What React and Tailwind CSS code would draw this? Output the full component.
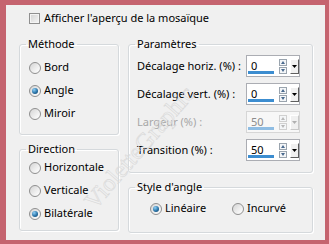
import React from "react"

const Radio = ({ checked }) => (
    <span className="flex items-center justify-center w-[12px] h-[12px] rounded-full border border-[#8f8f8f] bg-[linear-gradient(135deg,#d4d4d4,#f4f4f4_70%,#ffffff)] shrink-0">
        {checked && <span className="w-[6px] h-[6px] rounded-full bg-[radial-gradient(circle_at_35%_30%,#8fd0f7,#2a74a8_55%,#0c3a5e)]" />}
    </span>
)

const RadioRow = ({ label, checked, className = "" }) => (
    <div className={`flex items-center gap-[3px] h-[23px] ${className}`}>
        <Radio checked={checked} />
        <span>{label}</span>
    </div>
)

const Group = ({ title, className, children }) => (
    <fieldset className={`border border-[#d5d9dc] rounded-[3px] shadow-[inset_1px_1px_0_#ffffff,1px_1px_0_#ffffff] ${className}`}>
        <legend className="ml-[6px] px-[2px] leading-[16px]">{title}</legend>
        {children}
    </fieldset>
)

const Spin = ({ value, disabled }) => (
    <div className={`flex items-center w-[54px] h-[22px] border ${disabled ? "border-[#d6d6d6] bg-[#f7f7f7]" : "border-[#abadb3] bg-white"}`}>
        <div className="relative w-[31px] h-full pl-[4px] leading-[20px]">
            <span className={disabled ? "text-[#8c8c8c]" : "text-black"}>{value}</span>
            <div className={`absolute bottom-[2px] left-[1px] w-[26px] h-[3px] ${disabled ? "bg-[#8fbde3]" : "bg-[#3c8dd0]"}`} />
        </div>
        <div className="flex flex-col w-[8px] h-[15px] ml-px gap-px">
            <svg width="8" height="7" viewBox="0 0 8 7">
                <rect x="0.5" y="0.5" width="7" height="6" fill="#f4f6f8" stroke={disabled ? "#d0d0d0" : "#9aa4ae"} />
                <path d="M2 5 L4 2 L6 5 Z" fill={disabled ? "#b8b8b8" : "#4a6a8e"} />
            </svg>
            <svg width="8" height="7" viewBox="0 0 8 7">
                <rect x="0.5" y="0.5" width="7" height="6" fill="#f4f6f8" stroke={disabled ? "#d0d0d0" : "#9aa4ae"} />
                <path d="M2 2 L4 5 L6 2 Z" fill={disabled ? "#b8b8b8" : "#4a6a8e"} />
            </svg>
        </div>
        <div className={`flex items-center justify-center w-[9px] h-[15px] ml-[3px] bg-[#f0f0f0] border border-t-white border-l-white ${disabled ? "border-r-[#c8c8c8] border-b-[#c8c8c8]" : "border-r-[#5f5f5f] border-b-[#5f5f5f]"}`}>
            <svg width="5" height="3" viewBox="0 0 5 3">
                <path d="M0 0 L5 0 L2.5 3 Z" fill={disabled ? "#b0b0b0" : "#000000"} />
            </svg>
        </div>
    </div>
)

const ParamRow = ({ label, value, disabled }) => (
    <div className="flex items-center h-[22px]">
        <span className={`w-[117px] pl-[8px] ${disabled ? "text-[#a7a7a7]" : "text-black"}`}>{label}</span>
        <Spin value={value} disabled={disabled} />
    </div>
)

export default function App() {
    return (
        <div className="w-[329px] h-[244px] bg-[#c5646f] pl-[6px] pt-[5px] font-['Noto_Sans',sans-serif] text-[11px] text-black">
            <div className="relative w-[319px] h-[235px] bg-[#f0f0f0] overflow-hidden">
                <div className="flex items-center gap-[4px] ml-[23px] pt-[8px] h-[19px]">
                    <span className="w-[11px] h-[11px] border border-[#8f8f8f] bg-[linear-gradient(135deg,#d2d2d2,#f6f6f6)] shadow-[inset_0_0_0_1px_#f4f4f4]" />
                    <span>Afficher l'aperçu de la mosaïque</span>
                </div>

                <div className="flex gap-[9px] ml-[13px] mt-[12px]">
                    <div className="flex flex-col gap-[6px] w-[100px]">
                        <Group title="Méthode" className="h-[99px]">
                            <div className="flex flex-col pt-[4px] pl-[9px]">
                                <RadioRow label="Bord" />
                                <RadioRow label="Angle" checked />
                                <RadioRow label="Miroir" />
                            </div>
                        </Group>
                        <Group title="Direction" className="h-[90px]">
                            <div className="flex flex-col -mt-[1px] pl-[9px]">
                                <RadioRow label="Horizontale" />
                                <RadioRow label="Verticale" />
                                <RadioRow label="Bilatérale" checked />
                            </div>
                        </Group>
                    </div>

                    <div className="flex flex-col gap-[6px] w-[185px]">
                        <Group title="Paramètres" className="h-[137px]">
                            <div className="flex flex-col gap-[6px] pt-[3px]">
                                <ParamRow label="Décalage horiz. (%) :" value="0" />
                                <ParamRow label="Décalage vert. (%) :" value="0" />
                                <ParamRow label="Largeur (%) :" value="50" disabled />
                                <ParamRow label="Transition (%) :" value="50" />
                            </div>
                        </Group>
                        <Group title="Style d'angle" className="h-[54px]">
                            <div className="flex pt-[2px] pl-[21px]">
                                <RadioRow label="Linéaire" checked className="w-[82px]" />
                                <RadioRow label="Incurvé" />
                            </div>
                        </Group>
                    </div>
                </div>

                {/* watermark */}
                <svg className="absolute inset-0 pointer-events-none" width="319" height="235" viewBox="0 0 319 235">
                    <text x="134" y="150" textAnchor="middle" transform="rotate(-49 134 143)" fontFamily="Liberation Serif, serif" fontSize="24" fill="none" stroke="#d9d9d9" strokeWidth="0.6">
                        VioletteGraphic
                    </text>
                </svg>
            </div>
        </div>
    )
}
